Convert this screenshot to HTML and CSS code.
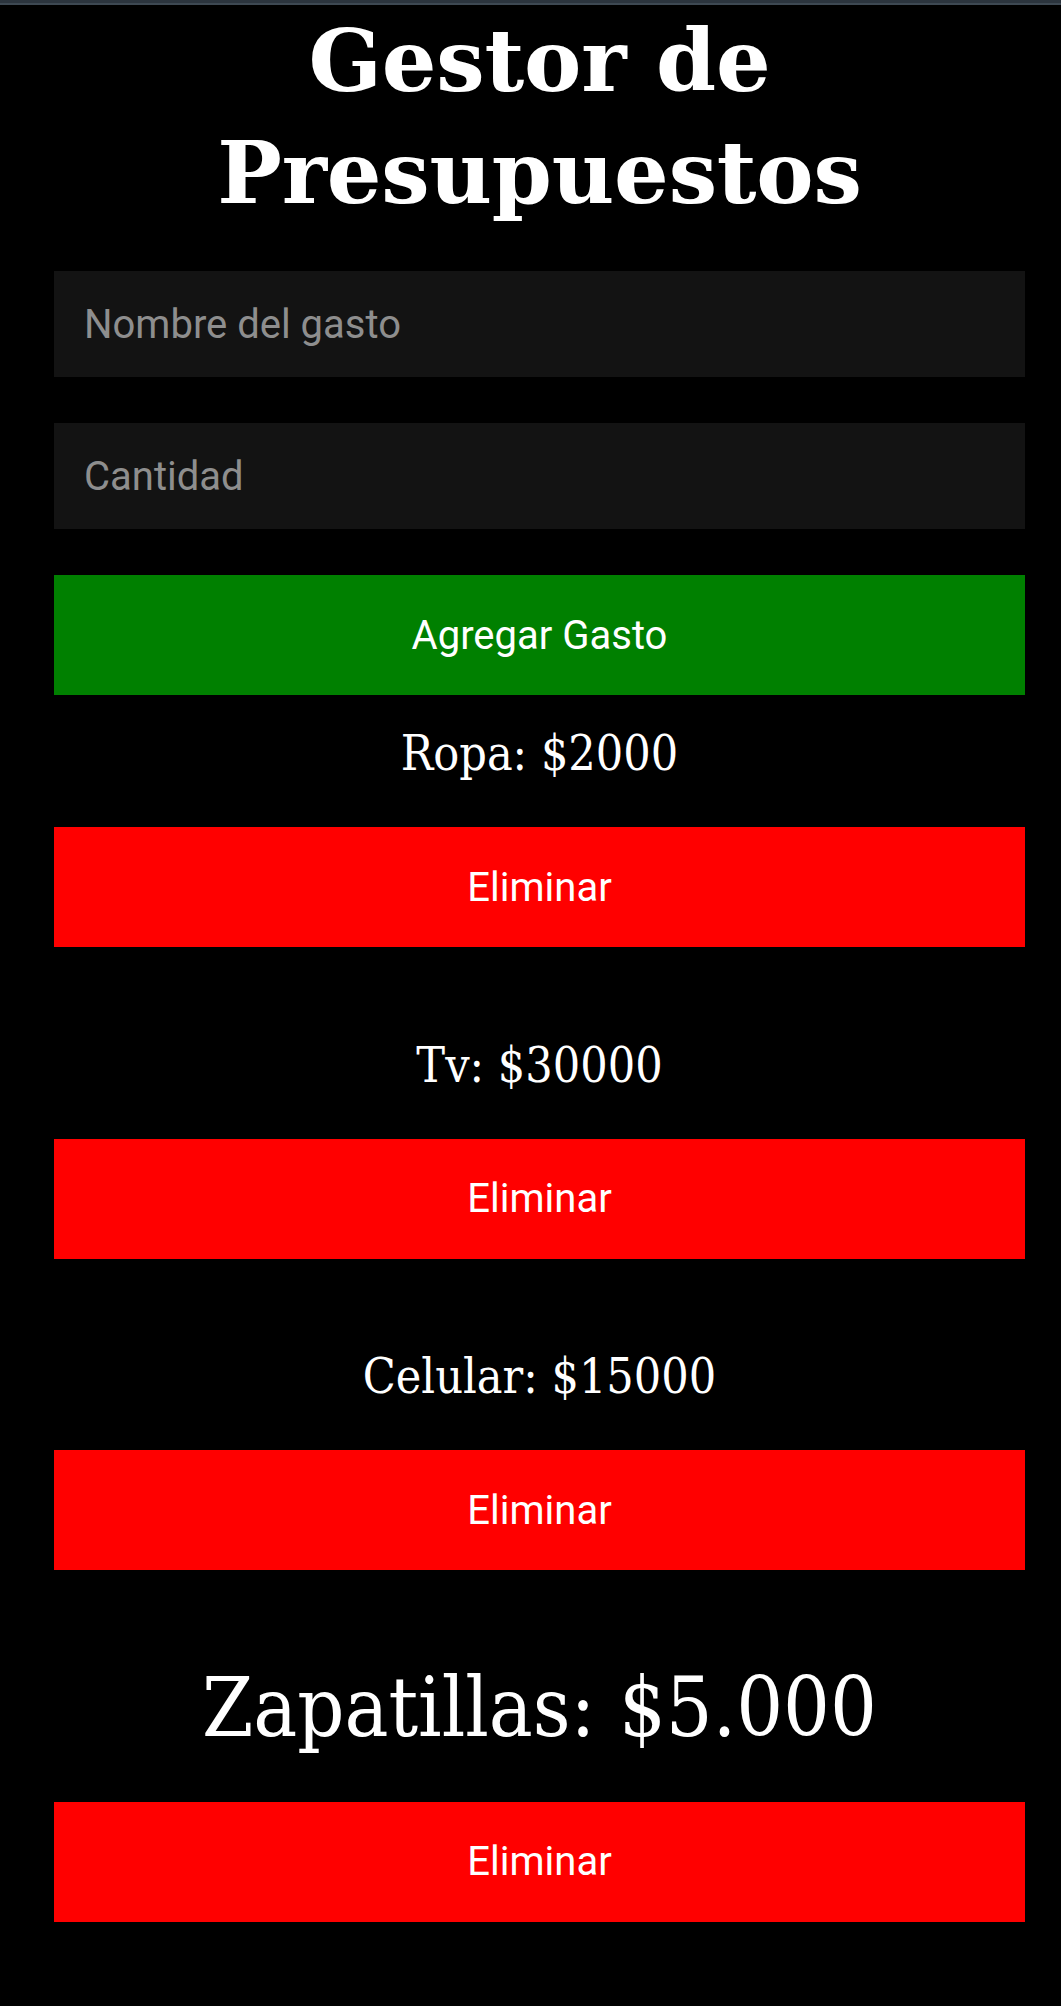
FILE: index.html
```html
<!DOCTYPE html>
<html lang="es">
<head>
<meta charset="utf-8">
<title>Gestor de Presupuestos</title>
<link rel="stylesheet" href="styles.css">
</head>
<body>
<div class="topbar"></div>
<main class="app">
  <h1 class="title">Gestor de Presupuestos</h1>
  <form class="form">
    <input class="field" type="text" placeholder="Nombre del gasto">
    <input class="field" type="text" placeholder="Cantidad">
    <button class="btn btn-add" type="button">Agregar Gasto</button>
  </form>
  <ul class="list">
    <li class="item">
      <p class="item-text">Ropa: $2000</p>
      <button class="btn btn-del" type="button">Eliminar</button>
    </li>
    <li class="item">
      <p class="item-text">Tv: $30000</p>
      <button class="btn btn-del" type="button">Eliminar</button>
    </li>
    <li class="item">
      <p class="item-text">Celular: $15000</p>
      <button class="btn btn-del" type="button">Eliminar</button>
    </li>
    <li class="item">
      <p class="item-text item-text-big">Zapatillas: $5.000</p>
      <button class="btn btn-del" type="button">Eliminar</button>
    </li>
  </ul>
</main>
</body>
</html>
```
FILE: styles.css
```css
html, body {
  margin: 0;
  padding: 0;
  background: #000;
}

body {
  color: #fff;
  font-family: "DejaVu Serif", serif;
}

.topbar {
  height: 3px;
  background: #2b343d;
  border-bottom: 2px solid #3d4852;
}

.app {
  padding: 0 36px 0 54px;
  display: flex;
  flex-direction: column;
}

.title {
  margin: 0;
  text-align: center;
  font-family: "DejaVu Serif", serif;
  font-weight: 700;
  font-size: 86px;
  line-height: 112px;
  letter-spacing: -0.2px;
}

.form {
  margin-top: 42px;
  display: flex;
  flex-direction: column;
  gap: 46px;
}

.field {
  display: block;
  box-sizing: border-box;
  width: 100%;
  height: 106px;
  margin: 0;
  padding: 0 0 0 30px;
  border: none;
  outline: none;
  background: #131313;
  color: #fff;
  font-family: Roboto, "Noto Sans", sans-serif;
  font-size: 40px;
}

.field::placeholder {
  color: #8e8e8e;
}

.btn {
  display: block;
  width: 100%;
  height: 120px;
  margin: 0;
  padding: 0;
  border: none;
  color: #fff;
  font-family: Roboto, "Noto Sans", sans-serif;
  font-size: 40px;
  text-align: center;
}

.btn-add {
  background: #008000;
}

.btn-del {
  background: #ff0000;
}

.list {
  list-style: none;
  margin: 30px 0 0;
  padding: 0;
  display: flex;
  flex-direction: column;
  gap: 89.5px;
}

.item {
  display: flex;
  flex-direction: column;
}

.item-text {
  margin: 0 0 46px;
  text-align: center;
  font-family: "DejaVu Serif", serif;
  font-stretch: condensed;
  font-size: 48px;
  line-height: 56px;
}

.item-text-big {
  font-size: 82px;
  line-height: 96px;
}
```
